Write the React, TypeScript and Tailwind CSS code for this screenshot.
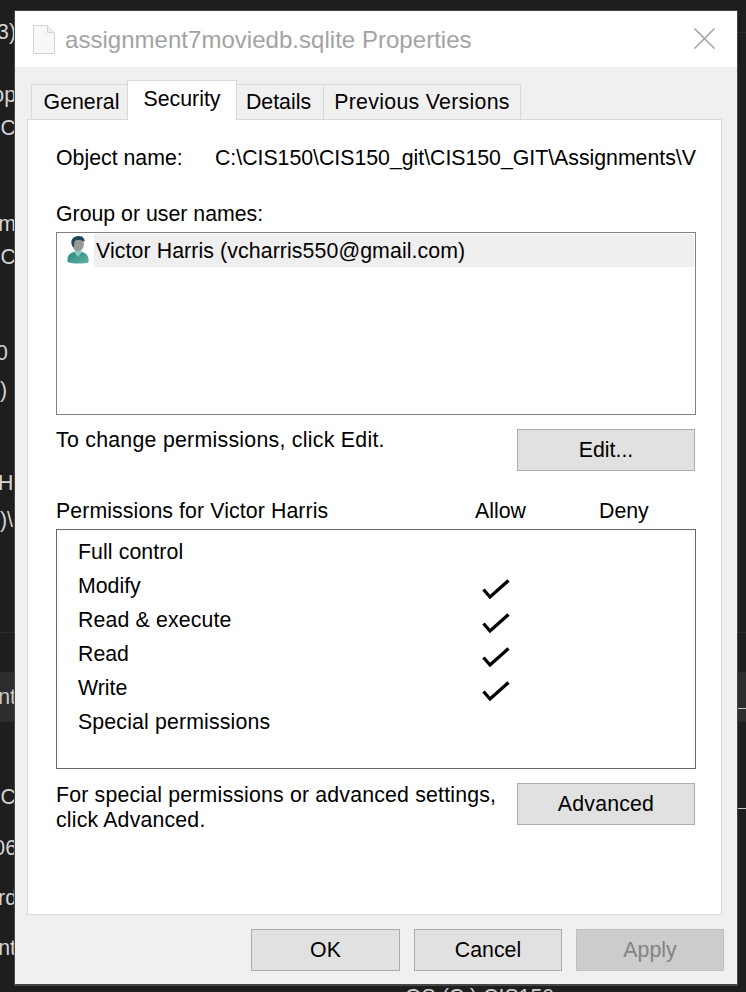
const FONT = "font-['Liberation_Sans',Arial,sans-serif]";

function Btn({ label, w, disabled }: { label: string; w: string; disabled?: boolean }) {
  return (
    <div
      className={`${w} h-[42px] flex items-center justify-center border ${
        disabled ? "bg-[#cccccc] border-[#bfbfbf] text-[#838383]" : "bg-[#e1e1e1] border-[#adadad] text-black"
      }`}
    >
      {label}
    </div>
  );
}

function Check() {
  return (
    <svg width="28" height="24" viewBox="0 0 28 24" fill="none">
      <path d="M1.5 11.5 L8 19 L26.5 2.5" stroke="#000" strokeWidth="3.3" />
    </svg>
  );
}

function Person() {
  return (
    <svg width="22" height="28" viewBox="0 0 22 28">
      <defs>
        <linearGradient id="bodyGrad" x1="0" y1="0" x2="1" y2="1">
          <stop offset="0" stopColor="#2c8a80" />
          <stop offset="1" stopColor="#5fb0a4" />
        </linearGradient>
      </defs>
      <path d="M0.5 26 C0 20 2 17.5 7 16 L15 16 C20 17.5 22 20 21.5 26.5 C16 28 6 28 0.5 26 Z" fill="url(#bodyGrad)" />
      <path d="M7 16 L11 21 L15 16 L14 14 L8 14 Z" fill="#8fc9bf" />
      <ellipse cx="11" cy="8" rx="6" ry="7.2" fill="#959a98" />
      <path d="M4.5 8 C3.5 2 8 0 12 0 C16 0 18 3 17.5 6 C15 3.5 9 3.5 8 5 C7 6 7 9 7 11 C6 11 5 10 4.5 8 Z" fill="#24475e" />
    </svg>
  );
}

function DocIcon() {
  return (
    <svg width="22" height="29" viewBox="0 0 22 29" fill="none">
      <path d="M0.5 0.5 H14.5 L21.5 7.5 V28.5 H0.5 Z" fill="#f7f8f9" stroke="#d2d2d2" />
      <path d="M14.5 0.5 V7.5 H21.5" fill="#eeeeee" stroke="#d2d2d2" />
    </svg>
  );
}

const perms: [string, boolean, string][] = [
  ["Full control", false, "tracking-[0.09px]"],
  ["Modify", true, ""],
  ["Read & execute", true, "tracking-[0.14px]"],
  ["Read", true, ""],
  ["Write", true, ""],
  ["Special permissions", false, "tracking-[0.15px]"],
];

export default function App() {
  return (
    <div className={`${FONT} w-[746px] h-[992px] bg-[#1e1e1e] overflow-hidden flex text-[21.3px] leading-[24px]`}>
      {/* Text of the window behind, cut off by the dialog */}
      <div className="w-[14px] shrink-0 pt-[20px] text-[#d4d4d4] overflow-hidden whitespace-nowrap">
        <div className="h-[63px] flex justify-end"><span className="-mr-[2px]">3)</span></div>
        <div className="h-[33px] flex justify-end"><span className="-mr-[2px]">op</span></div>
        <div className="h-[96px] flex justify-end"><span className="-mr-[2px]">C</span></div>
        <div className="h-[33px] flex justify-end"><span className="-mr-[2px]">m</span></div>
        <div className="h-[96px] flex justify-end"><span className="-mr-[2px]">C</span></div>
        <div className="h-[37px] flex"><span className="-ml-[4px]">0</span></div>
        <div className="h-[93px] flex"><span>)</span></div>
        <div className="h-[37px] flex"><span className="-ml-[2px]">H</span></div>
        <div className="h-[124px] flex"><span>)\</span></div>
        <div className="h-px bg-[#2c2c2c]" />
        <div className="h-[50px] mt-[39px] bg-[#2d2d2d] flex items-center justify-end text-[#c8c8c8]">
          <span className="-mr-[2px]">nt</span>
        </div>
        <div className="h-[51px] mt-[63px] flex justify-end"><span className="-mr-[2px]">C</span></div>
        <div className="h-[50px] flex justify-end"><span className="-mr-[3px]">06</span></div>
        <div className="h-[50px] flex justify-end"><span className="-mr-[3px]">ord</span></div>
        <div className="h-[50px] flex justify-end"><span className="-mr-[2px]">nt</span></div>
      </div>

      <div className="w-[724px] shrink-0 pt-[10px]">
        {/* Dialog */}
        <div className="h-[976px] border border-[#454545] border-b-2 bg-[#f0f0f0] flex flex-col text-black">
          <div className="h-[56px] shrink-0 bg-white flex items-center pl-[18px] pr-[22px]">
            <DocIcon />
            <span className="ml-[10px] text-[24px] tracking-[0.03px] text-[#a3a3a3] mt-[1px]">assignment7moviedb.sqlite Properties</span>
            <svg className="ml-auto mt-[-2px]" width="21" height="21" viewBox="0 0 21 21" fill="none">
              <path d="M0.5 0.5 L20.5 20.5 M20.5 0.5 L0.5 20.5" stroke="#a0a0a0" strokeWidth="1.5" />
            </svg>
          </div>

          <div className="flex items-end pl-[16px] mt-[13px] h-[39px] shrink-0 whitespace-nowrap">
            <div className="w-[96px] h-[35px] bg-[#f0f0f0] border-l border-t border-[#d9d9d9] flex justify-center pl-[4px] pt-[5px]">General</div>
            <div className="w-[110px] h-[40px] -mb-px z-10 bg-white border-l border-t border-r border-[#d9d9d9] flex justify-center pt-[6px]">Security</div>
            <div className="w-[87px] h-[35px] bg-[#f0f0f0] border-t border-r border-[#d9d9d9] flex justify-center pr-[3px] pt-[5px]">Details</div>
            <div className="w-[197px] h-[35px] bg-[#f0f0f0] border-t border-r border-[#d9d9d9] flex justify-center pt-[5px] tracking-[0.3px]">Previous Versions</div>
          </div>

          <div className="ml-[12px] w-[695px] h-[796px] shrink-0 bg-white border border-[#d9d9d9] pl-[28px] pr-[25px]">
            <div className="flex mt-[26px] whitespace-nowrap overflow-hidden">
              <span className="w-[159px] shrink-0">Object name:</span>
              <span className="tracking-[-0.02px]">C:\CIS150\CIS150_git\CIS150_GIT\Assignments\V</span>
            </div>
            <div className="mt-[32px]">Group or user names:</div>
            <div className="mt-[6px] h-[183px] border border-[#828282] p-px">
              <div className="flex h-[33px]">
                <div className="w-[36px] shrink-0 flex justify-center pt-[2px] pl-[4px]"><Person /></div>
                <div className="flex-1 bg-[#efefef] flex items-center pl-[2px] tracking-[0.1px]">Victor Harris (vcharris550@gmail.com)</div>
              </div>
            </div>

            <div className="mt-[14px] flex justify-between pr-px">
              <span className="mt-[-1px] tracking-[0.27px]">To change permissions, click Edit.</span>
              <Btn label="Edit..." w="w-[178px]" />
            </div>

            <div className="mt-[28px] flex">
              <span className="w-[419px] tracking-[0.1px]">Permissions for Victor Harris</span>
              <span className="w-[124px]">Allow</span>
              <span>Deny</span>
            </div>
            <div className="mt-[6px] h-[240px] border border-[#696969] pl-[21px] pt-[10px]">
              {perms.map(([name, ok, spacing]) => (
                <div key={name} className="h-[34px] flex relative">
                  <span className={spacing}>{name}</span>
                  {ok && (
                    <span className="absolute left-[404px] top-[4px]">
                      <Check />
                    </span>
                  )}
                </div>
              ))}
            </div>

            <div className="mt-[14px] flex justify-between pr-px">
              <span className="leading-[25px] tracking-[0.18px]">
                For special permissions or advanced settings,
                <br />
                click Advanced.
              </span>
              <div className="tracking-[0.2px]">
                <Btn label="Advanced" w="w-[178px]" />
              </div>
            </div>
          </div>

          <div className="flex justify-end gap-[14px] mt-[14px] pr-[13px]">
            <Btn label="OK" w="w-[149px]" />
            <Btn label="Cancel" w="w-[148px]" />
            <Btn label="Apply" w="w-[148px]" disabled />
          </div>
        </div>
        <div className="pl-[391px] text-[#cccccc] whitespace-nowrap mt-[-1px]">OS (C:) CIS150</div>
      </div>

      {/* Right edge of the window behind */}
      <div className="w-[8px] shrink-0 pt-[32px]">
        <div className="h-px bg-[#2c2c2c]" />
        <div className="h-px mt-[599px] bg-[#2c2c2c]" />
        <div className="h-[50px] mt-[39px] bg-[#2d2d2d] pt-[36px]">
          <div className="h-px bg-[#c8c8c8]" />
        </div>
        <div className="h-px mt-[86px] bg-[#c8c8c8]" />
      </div>
    </div>
  );
}
